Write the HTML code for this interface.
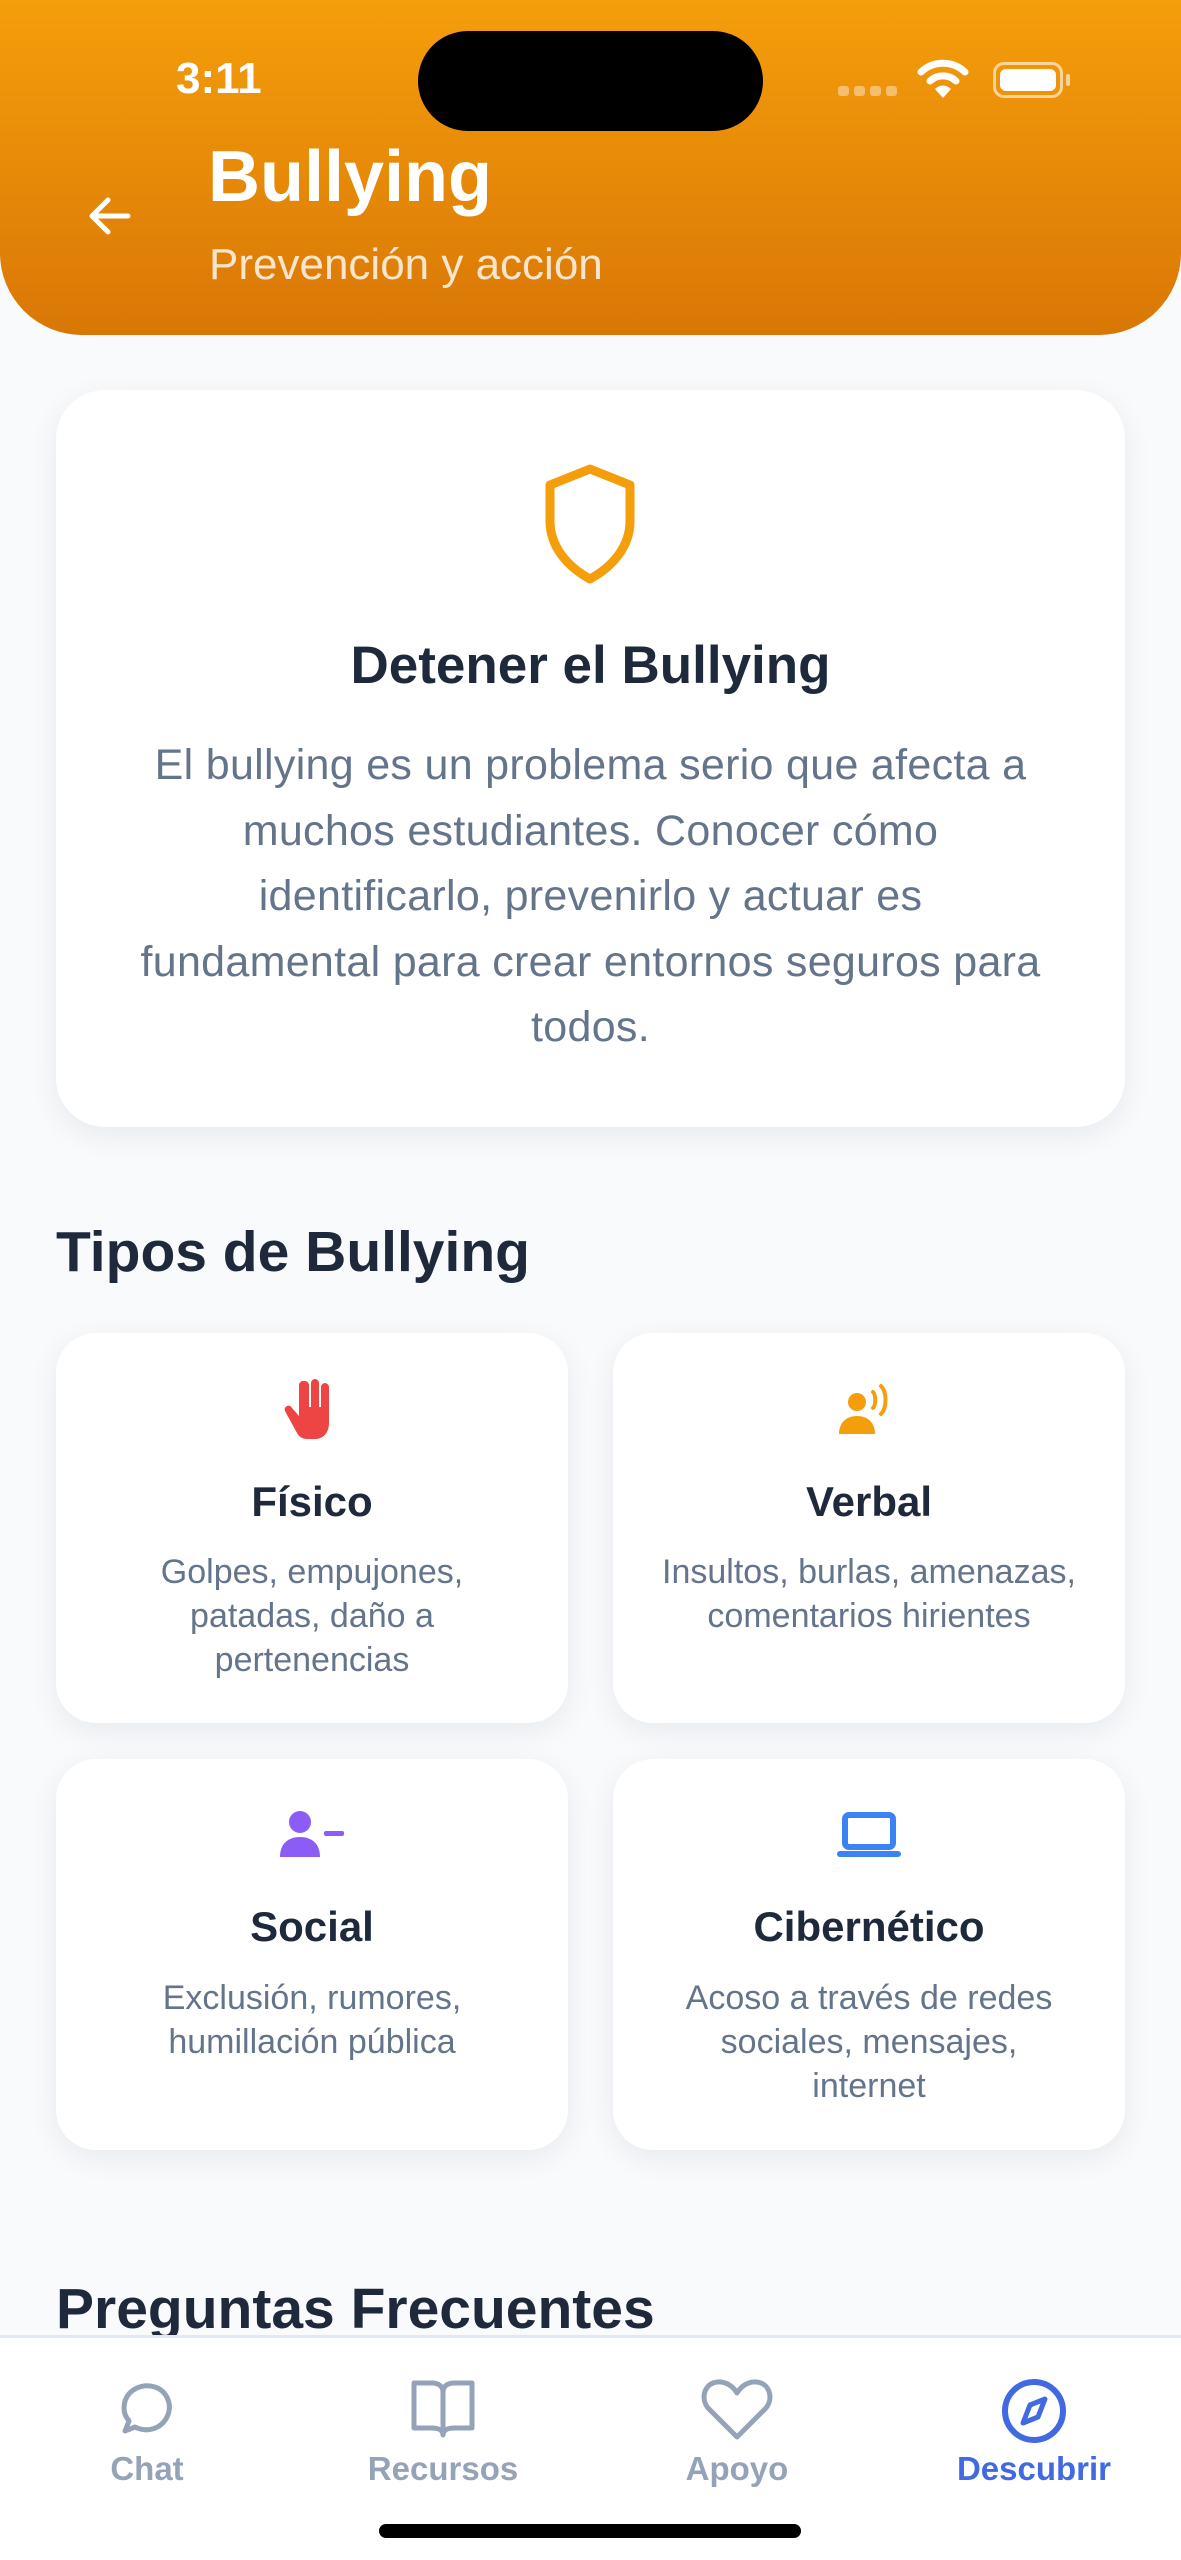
<!DOCTYPE html>
<html><head><meta charset="utf-8"><style>
*{margin:0;padding:0;box-sizing:border-box}
body{width:1181px;height:2560px;background:#f8fafc;font-family:"Liberation Sans",sans-serif;position:relative;overflow:hidden}
.hdr{position:absolute;left:0;top:0;width:1181px;height:335px;background:linear-gradient(180deg,#f59e0b,#d97706);border-radius:0 0 82px 82px}
.abs{position:absolute}
.card{position:absolute;background:#fff;border-radius:40px;box-shadow:0 8px 30px rgba(15,23,42,0.07)}
.ttl{position:absolute;left:0;right:0;text-align:center;font-weight:700;font-size:42px;color:#1e293b}
.dsc{position:absolute;left:0;right:0;text-align:center;font-size:34px;line-height:44px;color:#64748b;white-space:nowrap}
.tab{position:absolute;top:2450px;width:300px;text-align:center;font-size:33px;font-weight:700;color:#94a3b8}
</style></head><body>
<div class="hdr"></div>
<div class="abs" style="left:176px;top:54px;font-size:44px;font-weight:700;color:#fff">3:11</div>
<div class="abs" style="left:418px;top:31px;width:345px;height:100px;background:#000;border-radius:50px"></div>
<div class="abs" style="left:838px;top:86px;width:60px;height:10px;display:flex;gap:5px"><i style="width:11px;height:10px;background:rgba(255,255,255,.4);border-radius:3px"></i><i style="width:11px;height:10px;background:rgba(255,255,255,.4);border-radius:3px"></i><i style="width:11px;height:10px;background:rgba(255,255,255,.4);border-radius:3px"></i><i style="width:11px;height:10px;background:rgba(255,255,255,.4);border-radius:3px"></i></div>
<svg class="abs" style="left:917px;top:58px" width="52" height="42" viewBox="0 0 52 42"><path d="M4 14 A32 32 0 0 1 48 14" stroke="#fff" stroke-width="7" fill="none" stroke-linecap="round"/><path d="M13 23 A19 19 0 0 1 39 23" stroke="#fff" stroke-width="7" fill="none" stroke-linecap="round"/><path d="M26 40 L18 31 A11 11 0 0 1 34 31 Z" fill="#fff"/></svg>
<div class="abs" style="left:993px;top:62px;width:70px;height:36px;border:3px solid rgba(255,255,255,.6);border-radius:11px;padding:4px"><div style="width:100%;height:100%;background:#fff;border-radius:6px"></div></div>
<div class="abs" style="left:1066px;top:74px;width:4px;height:12px;background:rgba(255,255,255,.6);border-radius:2px"></div>
<svg class="abs" style="left:86px;top:192px" width="48" height="48" viewBox="0 0 48 48"><path d="M42 24H8M22 8 6 24 22 40" stroke="#fff" stroke-width="5" fill="none" stroke-linecap="round" stroke-linejoin="round"/></svg>
<div class="abs" style="left:208px;top:136px;font-size:72px;font-weight:700;color:#fff">Bullying</div>
<div class="abs" style="left:209px;top:240px;font-size:44px;color:rgba(255,255,255,.8)">Prevención y acción</div>

<div class="card" style="left:56px;top:390px;width:1069px;height:737px;border-radius:49px">
<svg class="abs" style="left:484px;top:73px" width="100" height="122" viewBox="0 0 100 122"><path d="M50 6 90 22V58C90 84 72 104 50 116 28 104 10 84 10 58V22Z" stroke="#f59e0b" stroke-width="9" fill="none" stroke-linejoin="round"/></svg>
<div class="ttl" style="top:245px;font-size:53px">Detener el Bullying</div>
<div class="dsc" style="top:343px;font-size:43px;line-height:65.5px;letter-spacing:0.3px">El bullying es un problema serio que afecta a<br>muchos estudiantes. Conocer cómo<br>identificarlo, prevenirlo y actuar es<br>fundamental para crear entornos seguros para<br>todos.</div>
</div>

<div class="abs" style="left:56px;top:1219px;font-size:57px;font-weight:700;color:#1e293b">Tipos de Bullying</div>

<div class="card" style="left:56px;top:1333px;width:512px;height:390px">
<svg class="abs" style="left:225px;top:44px" width="62" height="64" viewBox="0 0 62 64"><path d="M24 4c2 0 4 2 4 4v22h2V6c0-2 2-4 4-4s4 2 4 4v24h2V10c0-2 2-4 4-4s4 2 4 4v36c0 10-6 16-14 16h-8c-4 0-8-2-10-6L4 34c-1-2 0-4 2-5s4 0 5 2l7 8V8c0-2 2-4 4-4z" fill="#ef4444"/></svg>
<div class="ttl" style="top:145px">Físico</div>
<div class="dsc" style="top:217px">Golpes, empujones,<br>patadas, daño a<br>pertenencias</div>
</div>
<div class="card" style="left:613px;top:1333px;width:512px;height:390px">
<svg class="abs" style="left:222px;top:47px" width="64" height="56" viewBox="0 0 64 56"><circle cx="22" cy="22" r="9" fill="#f59e0b"/><path d="M4 54c0-12 8-18 18-18s18 6 18 18z" fill="#f59e0b"/><path d="M38 12c3 3 3 13 0 16M46 6c6 6 6 22 0 28" stroke="#f59e0b" stroke-width="4" fill="none" stroke-linecap="round"/></svg>
<div class="ttl" style="top:145px">Verbal</div>
<div class="dsc" style="top:217px">Insultos, burlas, amenazas,<br>comentarios hirientes</div>
</div>
<div class="card" style="left:56px;top:1759px;width:512px;height:391px">
<svg class="abs" style="left:222px;top:50px" width="70" height="50" viewBox="0 0 70 50"><circle cx="22" cy="13" r="11" fill="#8b5cf6"/><path d="M2 48c0-14 9-20 20-20s20 6 20 20z" fill="#8b5cf6"/><rect x="46" y="22" width="20" height="5" rx="2" fill="#8b5cf6"/></svg>
<div class="ttl" style="top:144px">Social</div>
<div class="dsc" style="top:217px">Exclusión, rumores,<br>humillación pública</div>
</div>
<div class="card" style="left:613px;top:1759px;width:512px;height:391px">
<svg class="abs" style="left:222px;top:52px" width="68" height="48" viewBox="0 0 68 48"><rect x="10" y="4" width="48" height="32" rx="4" stroke="#3b82f6" stroke-width="6" fill="none"/><rect x="2" y="40" width="64" height="6" rx="3" fill="#3b82f6"/></svg>
<div class="ttl" style="top:144px">Cibernético</div>
<div class="dsc" style="top:217px">Acoso a través de redes<br>sociales, mensajes,<br>internet</div>
</div>

<div class="abs" style="left:56px;top:2276px;font-size:57px;font-weight:700;color:#1e293b">Preguntas Frecuentes</div>

<div class="abs" style="left:0;top:2335px;width:1181px;height:225px;background:#fff;border-top:3px solid #e2e8f0"></div>
<svg class="abs" style="left:117px;top:2379px" width="60" height="60" viewBox="0 0 60 60"><path d="M8 52 12 42C7 36 6 30 8 22 12 10 26 4 38 8 50 12 56 26 50 38 44 50 30 54 18 48Z" stroke="#94a3b8" stroke-width="5" fill="none" stroke-linejoin="round"/></svg>
<svg class="abs" style="left:410px;top:2379px" width="66" height="60" viewBox="0 0 66 60"><path d="M4 4h18c6 0 11 3 11 9v43c0-5-5-7-11-7H4zM62 4H44c-6 0-11 3-11 9v43c0-5 5-7 11-7h18z" stroke="#94a3b8" stroke-width="5" fill="none" stroke-linejoin="round"/></svg>
<svg class="abs" style="left:701px;top:2379px" width="72" height="62" viewBox="0 0 72 62"><path d="M36 58 8 30C0 22 2 8 12 4c8-3 18 0 24 10 6-10 16-13 24-10 10 4 12 18 4 26z" stroke="#94a3b8" stroke-width="5" fill="none" stroke-linejoin="round"/></svg>
<svg class="abs" style="left:1000px;top:2377px" width="68" height="68" viewBox="0 0 68 68"><circle cx="34" cy="34" r="29" stroke="#4169e1" stroke-width="6" fill="none"/><path d="M45 22 38 40 23 46 30 28Z" stroke="#4169e1" stroke-width="5" fill="none" stroke-linejoin="round"/></svg>
<div class="tab" style="left:-3px">Chat</div>
<div class="tab" style="left:293px">Recursos</div>
<div class="tab" style="left:587px">Apoyo</div>
<div class="tab" style="left:884px;color:#4169e1">Descubrir</div>
<div class="abs" style="left:379px;top:2524px;width:422px;height:14px;background:#000;border-radius:7px"></div>
</body></html>
